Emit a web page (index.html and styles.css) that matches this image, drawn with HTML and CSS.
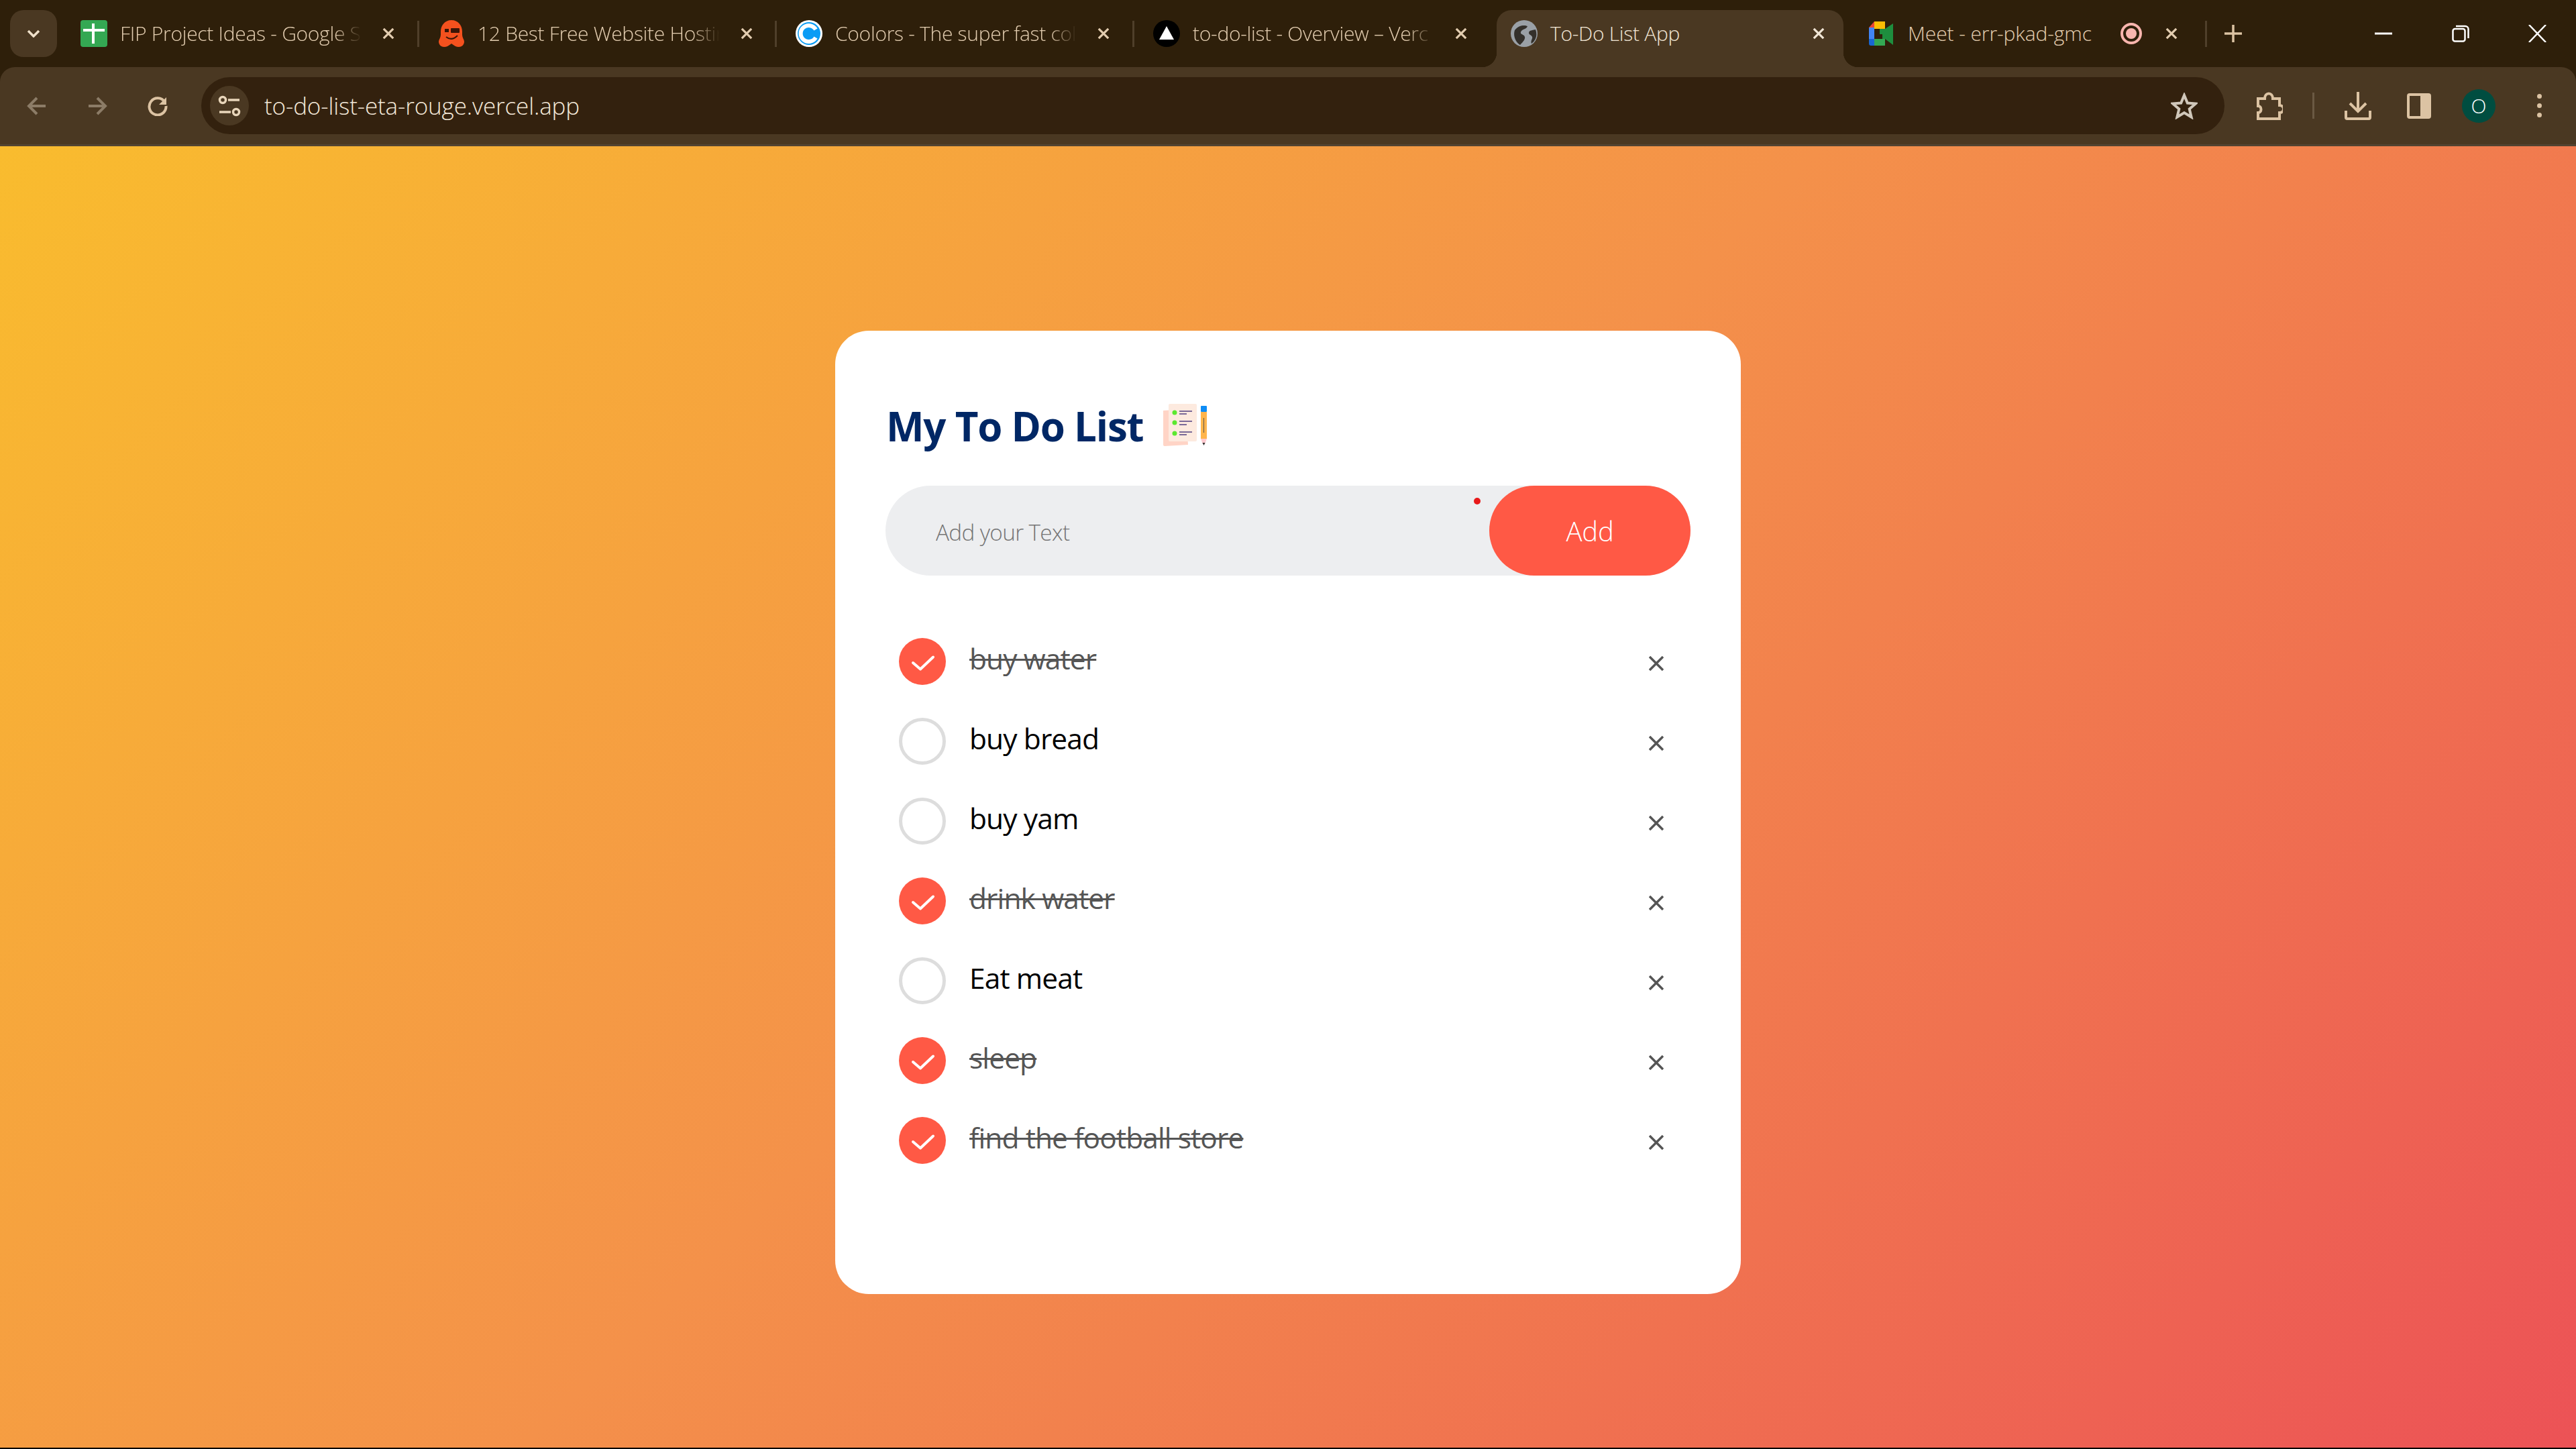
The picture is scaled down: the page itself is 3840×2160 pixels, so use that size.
FILE: index.html
```html
<!DOCTYPE html>
<html>
<head><title>To-Do List App</title>
<meta charset="utf-8">
<link rel="stylesheet" href="styles.css">
</head>
<body>

<div class="browser-top">
<div class="tabstrip">
	<div class="tablist-btn">
		<svg width="20" height="12" viewBox="0 0 20 12"><path d="M2 2l8 8 8-8" fill="none" stroke="#efe0ca" stroke-width="3.5"/></svg>
	</div>
	<div class="tab">
		<svg class="favicon" viewBox="0 0 40 40"><rect width="40" height="40" rx="4" fill="#34a853"/><path d="M19 5v30M4 15h32" stroke="#fff" stroke-width="4"/></svg>
		<span class="tab-title">FIP Project Ideas - Google S</span>
		<svg class="tab-close" viewBox="0 0 20 20"><path d="M2 2l16 16M18 2L2 18"/></svg>
	</div>
	<div class="tab">
		<svg class="favicon" viewBox="0 0 40 40"><path d="M20 0C10 0 4 8 4 17v5c0 4-3 7-3 10 0 5 4 8 8 8 4 0 7-2 11-5 4 3 7 5 11 5 4 0 8-3 8-8 0-3-3-6-3-10v-5C36 8 30 0 20 0z" fill="#f4511e"/><rect x="10" y="13" width="6" height="5" fill="#3a1608"/><rect x="19" y="12" width="13" height="7" rx="1" fill="#3a1608"/><path d="M12 25c5 4 11 4 17-2" fill="none" stroke="#3a1608" stroke-width="2"/></svg>
		<span class="tab-title">12 Best Free Website Hostin</span>
		<svg class="tab-close" viewBox="0 0 20 20"><path d="M2 2l16 16M18 2L2 18"/></svg>
	</div>
	<div class="tab">
		<svg class="favicon" viewBox="0 0 40 40"><circle cx="20" cy="20" r="20" fill="#fff"/><circle cx="20" cy="20" r="17" fill="#0a9cf5"/><path d="M30 14a12 12 0 1 0 0 12" fill="none" stroke="#fff" stroke-width="6"/></svg>
		<span class="tab-title">Coolors - The super fast col</span>
		<svg class="tab-close" viewBox="0 0 20 20"><path d="M2 2l16 16M18 2L2 18"/></svg>
	</div>
	<div class="tab no-sep">
		<svg class="favicon" viewBox="0 0 40 40"><circle cx="20" cy="20" r="20" fill="#000"/><path d="M20 9l11 20H9z" fill="#fff"/></svg>
		<span class="tab-title">to-do-list - Overview – Verc</span>
		<svg class="tab-close" viewBox="0 0 20 20"><path d="M2 2l16 16M18 2L2 18"/></svg>
	</div>
	<div class="tab tab-active">
		<svg class="favicon" viewBox="0 0 40 40"><circle cx="20" cy="20" r="20" fill="#9aa0a6"/><path d="M6 15c6-8 15-8 19-6-1 5-9 4-10 9-1 4 5 3 6 7 1 4-4 9-7 12C8 34 3 24 6 15zM37 14c3 8 1 16-6 21-2-4 2-7 1-10-1-3-5-3-5-6 0-4 6-4 10-5z" fill="#34302b"/></svg>
		<span class="tab-title">To-Do List App</span>
		<svg class="tab-close" viewBox="0 0 20 20"><path d="M2 2l16 16M18 2L2 18"/></svg>
	</div>
	<div class="tab tab-last">
		<svg class="favicon" viewBox="0 0 40 40"><path d="M9 2h16v11H9z" fill="#fbbc04"/><path d="M9 2L1 11h8z" fill="#ea4335"/><path d="M1 11h8v17H1z" fill="#4285f4"/><path d="M1 28h8v10H4a3 3 0 0 1-3-3z" fill="#1967d2"/><path d="M9 28h16v10H9z" fill="#34a853"/><path d="M25 13v15h-4v-7h-4v-8z" fill="#1e8e3e"/><path d="M25 13v15l12 9V5z" fill="#1e8e3e"/><path d="M25 2v11h-8V2z" fill="#fbbc04"/><path d="M20 28v10h-11V28z" fill="#34a853"/></svg>
		<span class="tab-title">Meet - err-pkad-gmc</span>
		<svg class="rec" viewBox="0 0 32 40"><ellipse cx="16" cy="20" rx="14" ry="14" fill="none" stroke="#f9b5ae" stroke-width="4"/><circle cx="16" cy="20" r="8" fill="#f9b5ae"/></svg>
		<svg class="tab-close" viewBox="0 0 20 20"><path d="M2 2l16 16M18 2L2 18"/></svg>
	</div>
	<svg class="new-tab" viewBox="0 0 26 26"><path d="M13 0v26M0 13h26"/></svg>
	<div class="win-btns">
		<div class="win-btn"><svg width="26" height="4" viewBox="0 0 26 4"><path d="M0 2h26" stroke="#fff" stroke-width="3"/></svg></div>
		<div class="win-btn"><svg width="26" height="26" viewBox="0 0 26 26" fill="none" stroke="#fff" stroke-width="2.5"><rect x="1.5" y="6" width="18" height="18.5" rx="3"/><path d="M6 2h14a4.500 4.500 0 0 1 4.500 4.500V20"/></svg></div>
		<div class="win-btn"><svg width="27" height="26" viewBox="0 0 27 26"><path d="M1 0l25 26M26 0L1 26" stroke="#fff" stroke-width="2.500"/></svg></div>
	</div>
</div>

<div class="toolbar">
	<svg class="nav-icon dim" viewBox="0 0 30 30"><path d="M28 15H4M15 3L3 15l12 12"/></svg>
	<svg class="nav-icon dim" viewBox="0 0 30 30"><path d="M2 15h24M15 3l12 12-12 12"/></svg>
	<svg class="nav-icon" viewBox="0 0 30 30"><path d="M25.500 9A12.500 12.500 0 1 0 27.500 15"/><path class="solid" d="M28 2v11H17z"/></svg>
	<div class="omnibox">
		<div class="tune">
			<svg width="34" height="32" viewBox="0 0 34 32" fill="none" stroke="#e9d6bb" stroke-width="3.500"><circle cx="7" cy="7" r="4.500"/><path d="M15 7h17M2 25h17"/><circle cx="27" cy="25" r="4.500"/></svg>
		</div>
		<span class="url">to-do-list-eta-rouge.vercel.app</span>
		<svg class="star" viewBox="0 0 40 40"><path d="M20 4l4.800 11.500 12.200 1-9.300 8 2.900 12L20 30l-10.600 6.500 2.900-12-9.300-8 12.200-1z"/></svg>
	</div>
	<svg class="tool ext" viewBox="0 0 40 42" fill="none" stroke="#dcc3a3" stroke-width="4"><path d="M3 10h10c0-10 12-10 12 0h10v10c8 0 8 11 0 11v9H3V31c6 0 6-10 0-10z"/></svg>
	<div class="tool-sep"></div>
	<svg class="tool dl" viewBox="0 0 40 42" fill="none" stroke="#dcc3a3" stroke-width="4"><path d="M20 0v28M8 17l12 12 12-12"/><path d="M2 28v10a2 2 0 0 0 2 2h32a2 2 0 0 0 2-2V28"/></svg>
	<svg class="tool panel" viewBox="0 0 36 38"><path fill-rule="evenodd" d="M4 0h28a4 4 0 0 1 4 4v30a4 4 0 0 1-4 4H4a4 4 0 0 1-4-4V4a4 4 0 0 1 4-4zM4 4v30h16V4z" fill="#dcc3a3"/></svg>
	<div class="avatar">O</div>
	<div class="menu-dots"><i></i><i></i><i></i></div>
</div>
</div>

<div class="page">
	<div class="todo-app">
		<h2 class="todo-title"><span>My To Do List</span>
			<svg class="title-icon" viewBox="0 0 75 64">
				<path d="M2 10l34-2 3 53-35 2a2 2 0 0 1-2-2z" fill="#ffd4c6"/>
				<rect x="10" y="0" width="42" height="56" rx="2" fill="#fdeadf"/>
				<circle cx="19" cy="13" r="3.500" fill="#5be82f"/><circle cx="19" cy="28" r="3.500" fill="#5be82f"/><circle cx="19" cy="44" r="3.500" fill="#5be82f"/>
				<path d="M26 11h19M26 15h11M26 26h19M26 31h11M26 42h19M26 46h11" stroke="#7b6a98" stroke-width="1.800"/>
				<rect x="58" y="3" width="9" height="9" rx="1" fill="#0e8cf5"/>
				<rect x="58" y="12" width="9" height="40" fill="#ffb54d"/>
				<path d="M62.500 21v22" stroke="#5d5347" stroke-width="1"/>
				<path d="M58 52h9l-3 8h-3z" fill="#ffc9cf"/>
				<path d="M60.500 58h4l-2 4z" fill="#333"/>
			</svg>
		</h2>
		<div class="row">
			<input class="task-input" type="text" placeholder="Add your Text">
			<button class="add-btn">Add</button>
			<span class="rec-dot"></span>
		</div>
		<ul class="task-list">
			<li class="task checked">
				<svg class="check" viewBox="0 0 70 70"><circle cx="35" cy="35" r="35" fill="#ff5945"/><path d="M21 37l11 9.500 19-18" fill="none" stroke="#fff" stroke-width="4" stroke-linecap="round" stroke-linejoin="round"/></svg>
				<span class="task-text">buy water</span>
				<svg class="remove" viewBox="0 0 22 22"><path d="M1 1l20 20M21 1L1 21"/></svg>
			</li>
			<li class="task">
				<span class="circle"></span>
				<span class="task-text">buy bread</span>
				<svg class="remove" viewBox="0 0 22 22"><path d="M1 1l20 20M21 1L1 21"/></svg>
			</li>
			<li class="task">
				<span class="circle"></span>
				<span class="task-text">buy yam</span>
				<svg class="remove" viewBox="0 0 22 22"><path d="M1 1l20 20M21 1L1 21"/></svg>
			</li>
			<li class="task checked">
				<svg class="check" viewBox="0 0 70 70"><circle cx="35" cy="35" r="35" fill="#ff5945"/><path d="M21 37l11 9.500 19-18" fill="none" stroke="#fff" stroke-width="4" stroke-linecap="round" stroke-linejoin="round"/></svg>
				<span class="task-text">drink water</span>
				<svg class="remove" viewBox="0 0 22 22"><path d="M1 1l20 20M21 1L1 21"/></svg>
			</li>
			<li class="task">
				<span class="circle"></span>
				<span class="task-text">Eat meat</span>
				<svg class="remove" viewBox="0 0 22 22"><path d="M1 1l20 20M21 1L1 21"/></svg>
			</li>
			<li class="task checked">
				<svg class="check" viewBox="0 0 70 70"><circle cx="35" cy="35" r="35" fill="#ff5945"/><path d="M21 37l11 9.500 19-18" fill="none" stroke="#fff" stroke-width="4" stroke-linecap="round" stroke-linejoin="round"/></svg>
				<span class="task-text">sleep</span>
				<svg class="remove" viewBox="0 0 22 22"><path d="M1 1l20 20M21 1L1 21"/></svg>
			</li>
			<li class="task checked">
				<svg class="check" viewBox="0 0 70 70"><circle cx="35" cy="35" r="35" fill="#ff5945"/><path d="M21 37l11 9.500 19-18" fill="none" stroke="#fff" stroke-width="4" stroke-linecap="round" stroke-linejoin="round"/></svg>
				<span class="task-text">find the football store</span>
				<svg class="remove" viewBox="0 0 22 22"><path d="M1 1l20 20M21 1L1 21"/></svg>
			</li>
		</ul>
	</div>
</div>

</body>
</html>
```

FILE: styles.css
```css
* {
	box-sizing: border-box;
}

html, body {
	margin: 0;
	padding: 0;
}

body {
	width: 3840px;
	height: 2160px;
	display: flex;
	flex-direction: column;
	background-color: #000;
	overflow: hidden;
	font-family: "Open Sans", "Noto Sans", sans-serif;
}

.browser-top {
	flex: none;
	background-color: #2e1f0a;
}

/* browser tabs */
.tabstrip {
	height: 100px;
	display: flex;
	padding: 15px 0 0 15px;
}

.tablist-btn {
	width: 70px;
	height: 70px;
	margin-right: 14px;
	flex: none;
	display: flex;
	align-items: center;
	justify-content: center;
	background-color: #4a3822;
	border-radius: 20px;
}

.tab {
	position: relative;
	width: 517px;
	height: 85px;
	margin-right: 16px;
	padding: 0 28px 15px 21px;
	flex: none;
	display: flex;
	align-items: center;
	color: #e3cdb0;
	font-size: 30px;
	font-weight: 350;
	letter-spacing: -0.3px;
	white-space: nowrap;
}

.tab::after {
	content: "";
	position: absolute;
	right: -9px;
	top: 16px;
	width: 3px;
	height: 39px;
	background-color: #4f3f2a;
}

.no-sep::after,
.tab-active::after {
	display: none;
}

.favicon {
	width: 40px;
	height: 40px;
	flex: none;
	margin-right: 19px;
}

.tab-title {
	flex: 1;
	margin-bottom: 2px;
	-webkit-mask-image: linear-gradient(to right, #000 86%, transparent 97%);
	mask-image: linear-gradient(to right, #000 86%, transparent 97%);
}

.tab-close {
	width: 18px;
	height: 20px;
	flex: none;
	margin-left: 20px;
	fill: none;
	stroke: #e3cdb0;
	stroke-width: 3.500;
}

.tab-active {
	background-color: #4a3822;
	border-radius: 22px 22px 0 0;
	color: #f1e6d6;
}

.tab-active .tab-close {
	stroke: #f1e6d6;
}

.tab-active .tab-title,
.tab-last .tab-title {
	-webkit-mask-image: none;
	mask-image: none;
}

.tab-active::before {
	content: "";
	position: absolute;
	left: -22px;
	bottom: 0;
	width: 22px;
	height: 22px;
	background: radial-gradient(circle at 0 0, transparent 22px, #4a3822 22.500px);
}

.tab-active .tab-title::after {
	content: "";
	position: absolute;
	right: -22px;
	bottom: 0;
	width: 22px;
	height: 22px;
	background: radial-gradient(circle at 100% 0, transparent 22px, #4a3822 22.500px);
}

.tab-last {
	margin-right: 35px;
	padding-right: 35px;
	letter-spacing: -0.1px;
}

.rec {
	width: 32px;
	height: 40px;
	flex: none;
}

.tab-last .tab-close {
	margin-left: 35px;
}

.new-tab {
	width: 26px;
	height: 26px;
	flex: none;
	margin-top: 22px;
	fill: none;
	stroke: #dcc3a3;
	stroke-width: 3.500;
}

.win-btns {
	display: flex;
	margin-left: auto;
	height: 70px;
}

.win-btn {
	width: 115px;
	display: flex;
	align-items: center;
	justify-content: center;
}

/* browser toolbar */
.toolbar {
	height: 118px;
	display: flex;
	align-items: center;
	padding-left: 40px;
	background-color: #4a3822;
	border-bottom: 3px solid #524331;
	border-radius: 22px 22px 0 0;
}

.nav-icon {
	width: 30px;
	height: 30px;
	flex: none;
	margin-right: 60px;
	fill: none;
	stroke: #dcc3a3;
	stroke-width: 4;
}

.nav-icon .solid {
	fill: #dcc3a3;
	stroke: none;
}

.dim {
	stroke: #8c7c67;
}

.omnibox {
	width: 3016px;
	height: 85px;
	margin-left: -10px;
	flex: none;
	display: flex;
	align-items: center;
	padding: 0 40px 0 13px;
	background-color: #33210e;
	border-radius: 43px;
}

.tune {
	width: 58px;
	height: 59px;
	flex: none;
	display: flex;
	align-items: center;
	justify-content: center;
	background-color: #4a3822;
	border-radius: 50%;
}

.url {
	margin-left: 23px;
	color: #f3e8d9;
	font-size: 35px;
	font-weight: 350;
	letter-spacing: -0.12px;
}

.star {
	width: 40px;
	height: 40px;
	margin-left: auto;
	fill: none;
	stroke: #d0c7ba;
	stroke-width: 4;
}

.tool {
	flex: none;
}

.ext {
	width: 40px;
	height: 42px;
	margin-left: 47px;
}

.tool-sep {
	width: 3px;
	height: 39px;
	margin: 0 45px 0 44px;
	flex: none;
	background-color: #6a5943;
}

.dl {
	width: 40px;
	height: 42px;
}

.panel {
	width: 36px;
	height: 38px;
	margin-left: 53px;
}

.avatar {
	width: 50px;
	height: 50px;
	margin-left: 46px;
	flex: none;
	display: flex;
	align-items: center;
	justify-content: center;
	background-color: #004d40;
	border-radius: 50%;
	color: #fff;
	font-size: 30px;
	font-weight: 300;
}

.menu-dots {
	margin-left: 62px;
	display: flex;
	flex-direction: column;
	gap: 7px;
}

.menu-dots i {
	display: block;
	width: 7px;
	height: 7px;
	background-color: #dcc3a3;
	border-radius: 50%;
}

/* the page itself */
.page {
	flex: 1;
	margin-bottom: 2px;
	background: linear-gradient(135deg, #f9bc2e, #f4914a 47%, #ec5256);
}

.todo-app {
	width: 1350px;
	margin: 275px auto 0;
	padding: 100px 75px 175px;
	background-color: #fff;
	border-radius: 50px;
}

.todo-title {
	height: 81px;
	margin: 0 0 50px;
	padding: 2px 0 0 1px;
	display: flex;
	align-items: center;
	color: #002765;
	font-size: 60px;
	font-weight: 700;
	letter-spacing: -1.200px;
}

.title-icon {
	width: 75px;
	height: 64px;
	margin-left: 28px;
	margin-top: -2px;
}

.row {
	position: relative;
	height: 134px;
	margin-bottom: 63px;
	display: flex;
	background-color: #edeef0;
	border-radius: 75px;
}

.task-input {
	flex: 1;
	min-width: 0;
	padding: 4px 25px 0 75px;
	border: 0;
	outline: 0;
	background: transparent;
	font-family: inherit;
	font-size: 33.300px;
	font-weight: 350;
	letter-spacing: -0.65px;
}

.add-btn {
	width: 300px;
	border: 0;
	background-color: #ff5945;
	border-radius: 100px;
	color: #fff;
	font-family: inherit;
	font-size: 40px;
	font-weight: 350;
	letter-spacing: -0.2px;
}

.rec-dot {
	position: absolute;
	left: 877px;
	top: 18px;
	width: 10px;
	height: 10px;
	background-color: #e8191a;
	border-radius: 50%;
}

.task-list {
	margin: 0;
	padding: 0;
	list-style: none;
}

.task {
	height: 119px;
	padding: 30px 20px;
	display: flex;
	align-items: flex-start;
}

.check, .circle {
	width: 70px;
	height: 70px;
	flex: none;
	margin-right: 35px;
}

.circle {
	border: 5px solid #ddd;
	border-radius: 50%;
}

.task-text {
	color: #000;
	font-size: 42.500px;
	font-weight: 380;
	letter-spacing: -0.9px;
	line-height: 62px;
}

.checked .task-text {
	color: #555;
	text-decoration: line-through;
	text-decoration-thickness: 3px;
}

.remove {
	width: 22px;
	height: 22px;
	margin: 27px 20px 0 auto;
	flex: none;
	fill: none;
	stroke: #555;
	stroke-width: 3.500;
}
```
